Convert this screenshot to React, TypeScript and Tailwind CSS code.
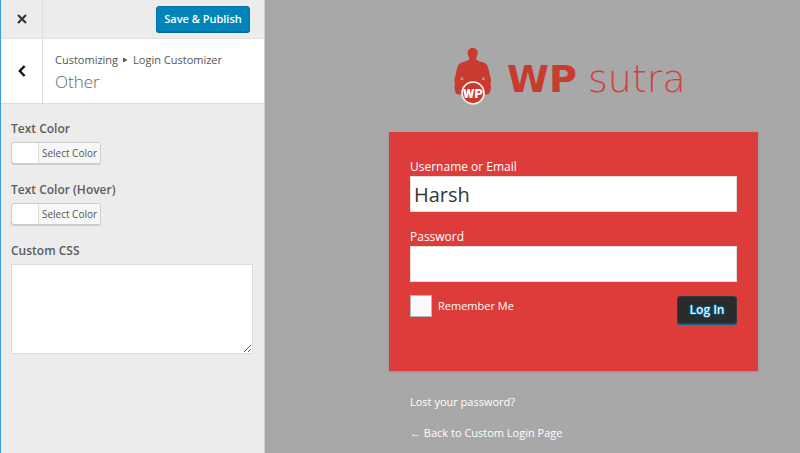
import { useState } from 'react';

function CloseIcon() {
  return (
    <svg width="12" height="12" viewBox="0 0 12 12" fill="none" stroke="#32373c" strokeWidth="2.2" aria-hidden="true">
      <path d="M2 2 10 10M10 2 2 10" />
    </svg>
  );
}

function BackIcon() {
  return (
    <svg width="8" height="12" viewBox="0 0 8 12" fill="none" stroke="#111" strokeWidth="2.4" aria-hidden="true">
      <path d="M6.6 1 1.8 6l4.8 5" />
    </svg>
  );
}

function Logo() {
  return (
    <svg width="240" height="60" viewBox="0 0 240 60" role="img" aria-label="WPsutra" className="max-w-full">
      <path
        fill="#c93a2f"
        d="M18.700 1c3 0 5 2 5 5 0 1.600-.5 3-1.300 4v2.800c2 1.600 7 2.200 9.600 4 2 2 2.800 6 3.300 9.200.4 2.500 1.700 4.500 1.700 7 0 2-.5 3.200-.5 4.500.8 2.500.3 6-.8 8.300-.5 1.200-1.500 1.700-3 1.700H4.700c-1.500 0-2.500-.5-3-1.700C.6 43.500.1 40 .9 37.500.9 36.200.4 35 .4 33c0-2.500 1.300-4.500 1.700-7 .5-3.200 1.300-7.200 3.300-9.200 2.600-1.800 7.600-2.400 9.600-4V10c-.8-1-1.300-2.400-1.300-4 0-3 2-5 5-5Z"
      />
      <path fill="#a8a8a8" d="M8.500 29.500 6 32.500l3.500.6ZM28.900 29.500l2.500 3-3.500.6Z" />
      <circle cx="19" cy="46" r="11" fill="#c93a2f" stroke="#f7eeee" strokeWidth="1.600" />
      <text x="19" y="51" textAnchor="middle" fill="#fff" className="font-['Roboto',sans-serif] text-[13px] font-black">
        WP
      </text>
      <text x="53" y="45" fill="#c93a2f" className="font-['DejaVu_Sans',sans-serif] text-[38px] font-bold">
        WP
      </text>
      <text x="134" y="45" fill="#d0433a" className="font-['DejaVu_Sans',sans-serif] text-[38px] font-extralight">
        sutra
      </text>
    </svg>
  );
}

function ColorControl({ id, label }: { id: string; label: string }) {
  return (
    <div>
      <div id={id} className="text-[12px] leading-[18px] font-semibold text-[#5c5c5c]">{label}</div>
      <button
        type="button"
        aria-describedby={id}
        className="mt-1 flex h-[22px] w-[90px] overflow-hidden rounded-[3px] border border-[#ccc] bg-white shadow-[0_1px_0_#ccc]"
      >
        <span className="h-full w-[27px] shrink-0 border-r border-[#ddd]" />
        <span className="flex-1 bg-[#f7f7f7] text-center text-[10px] leading-[20px] whitespace-nowrap text-[#555]">
          Select Color
        </span>
      </button>
    </div>
  );
}

export default function App() {
  const [user, setUser] = useState('Harsh');
  const [password, setPassword] = useState('');
  const [css, setCss] = useState('');

  return (
    <div className="flex min-h-screen bg-[#a8a8a8] font-['Open_Sans','Noto_Sans',sans-serif]">
      <aside className="w-[265px] shrink-0 border-r border-l border-r-[#ccc] border-l-[#3c9be0] bg-[#ececec]">
        <header className="flex h-[39px] items-center border-b border-[#e2e2e2]">
          <button type="button" aria-label="Close" className="flex h-full w-[42px] items-center justify-center border-r border-[#ddd]">
            <CloseIcon />
          </button>
          <button
            type="button"
            className="mr-[14px] ml-auto h-[26px] w-[94px] rounded-[3px] border border-[#0073aa] bg-[#0085ba] text-[11px] leading-[22px] font-semibold whitespace-nowrap text-white shadow-[0_1px_0_#006799]"
          >
            Save &amp; Publish
          </button>
        </header>
        <div className="flex h-[65px] border-b border-[#ddd] bg-white">
          <button type="button" aria-label="Back" className="flex w-[42px] items-center justify-center border-r border-[#ddd]">
            <BackIcon />
          </button>
          <div className="pt-3 pl-3">
            <nav className="flex items-center gap-[5px] text-[11px] leading-[18px] text-[#555]">
              <span>Customizing</span>
              <svg width="5" height="6" viewBox="0 0 5 6" fill="#555" aria-hidden="true">
                <path d="M0 0.500 4.500 3 0 5.500Z" />
              </svg>
              <span>Login Customizer</span>
            </nav>
            <h1 className="text-[17px] leading-[26px] font-light text-[#666]">Other</h1>
          </div>
        </div>
        <div className="flex flex-col gap-[17px] pt-4 pr-[11px] pl-[10px]">
          <ColorControl id="text-color" label="Text Color" />
          <ColorControl id="text-color-hover" label="Text Color (Hover)" />
          <div>
            <label htmlFor="custom-css" className="block text-[12px] leading-[18px] font-semibold text-[#5c5c5c]">
              Custom CSS
            </label>
            <textarea
              id="custom-css"
              value={css}
              onChange={(e) => setCss(e.target.value)}
              className="mt-1 block h-[90px] w-full resize-y border border-[#ddd] bg-white p-1 text-[12px] outline-none"
            />
          </div>
        </div>
      </aside>

      <main className="min-w-0 flex-1 pt-[47px] pr-[42px] pl-[124px] text-white">
        <div className="flex h-[85px] items-start justify-center">
          <Logo />
        </div>
        <form
          onSubmit={(e) => e.preventDefault()}
          className="bg-[#de3c3a] px-[21px] pt-[26px] pb-[47px] shadow-[0_1px_3px_rgba(0,0,0,0.13)]"
        >
          <label htmlFor="user" className="block text-[12px] leading-[18px]">
            Username or Email
          </label>
          <input
            id="user"
            type="text"
            value={user}
            onChange={(e) => setUser(e.target.value)}
            className="block h-9 w-full border border-[#ddd] bg-white px-[3px] text-[20px] text-[#32373c] outline-none"
          />
          <label htmlFor="password" className="mt-4 block text-[12px] leading-[18px]">
            Password
          </label>
          <input
            id="password"
            type="password"
            value={password}
            onChange={(e) => setPassword(e.target.value)}
            className="block h-9 w-full border border-[#ddd] bg-white px-[3px] text-[20px] text-[#32373c] outline-none"
          />
          <div className="mt-[13px] flex items-start justify-between">
            <label className="flex items-center gap-[6px] text-[11px] leading-[22px]">
              <input
                type="checkbox"
                className="size-[22px] appearance-none border border-[#b4b9be] bg-[#fafafa] checked:bg-[#1e8cbe]"
              />
              Remember Me
            </label>
            <button
              type="submit"
              className="mt-px h-7 w-[60px] rounded-[3px] border border-[#3a3a3a] bg-[#2b2b2b] text-[12px] font-semibold whitespace-nowrap text-[#e8f4fa] shadow-[0_1px_0_#006799] [text-shadow:0_-1px_1px_#006799,1px_0_1px_#006799,0_1px_1px_#006799,-1px_0_1px_#006799]"
            >
              Log In
            </button>
          </div>
        </form>
        <div className="flex flex-col items-start gap-[13px] px-[21px] pt-[22px] pb-[10px] text-[11px] leading-[18px]">
          <a href="#lost">Lost your password?</a>
          <a href="#back">← Back to Custom Login Page</a>
        </div>
      </main>
    </div>
  );
}
